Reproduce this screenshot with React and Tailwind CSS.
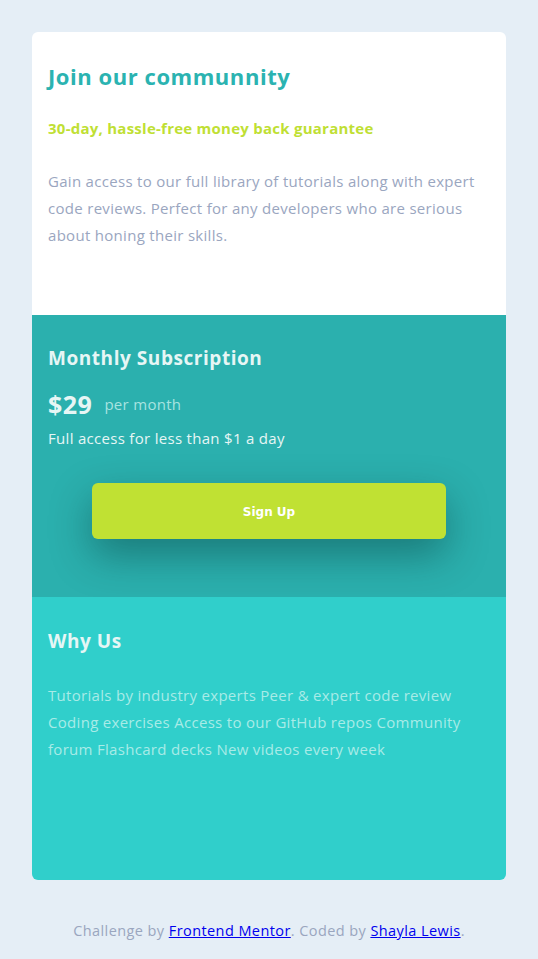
import React from 'react';

const font = { fontFamily: '"Open Sans", Lato, sans-serif' };

export default function App() {
  return (
    <div className="min-h-screen bg-[#e5eef6] px-8 pt-8" style={font}>
      {/* Card */}
      <div className="rounded-md overflow-hidden flex flex-col">
        {/* Intro */}
        <div className="bg-white h-[283px] px-4 pt-[30px]">
          <h1 className="text-[22px] font-bold text-[#2bb3b1] tracking-[0.55px] leading-7">Join our communnity</h1>
          <p className="mt-[28px] text-[15px] font-bold text-[#c0df34] tracking-[0.25px] leading-5">30-day, hassle-free money back guarantee</p>
          <p className="mt-[30px] text-[15px] tracking-[0.3px] leading-[27px] text-[#9aa6bf]">
            Gain access to our full library of tutorials along with expert code reviews. Perfect for any developers who are serious about honing their skills.
          </p>
        </div>

        {/* Monthly subscription */}
        <div className="bg-[#2bb0ae] h-[282px] px-4 pt-[31px]">
          <h2 className="text-[19px] font-bold text-[#e6f6f5] tracking-[0.55px] leading-6">Monthly Subscription</h2>
          <div className="mt-[20px] flex items-center">
            <span className="text-[25px] font-bold text-[#e6f6f5] tracking-[0.5px] leading-7">$29</span>
            <span className="ml-[12px] text-[15px] text-[#a7e3e0] tracking-[0.3px] leading-7">per month</span>
          </div>
          <p className="mt-[10px] text-[15px] text-[#e6f6f5] tracking-[0.3px] leading-5">Full access for less than $1 a day</p>
          <div className="flex justify-center mt-[35px]">
            <button
              className="w-[354px] h-[56px] pt-[2px] rounded-md bg-[#c0e133] text-white text-[12px] font-bold shadow-[0_16px_40px_rgba(0,40,40,0.4)]"
              style={{ fontFamily: 'Verdana, "DejaVu Sans", sans-serif' }}
            >
              Sign Up
            </button>
          </div>
        </div>

        {/* Why us */}
        <div className="bg-[#30cfcb] h-[283px] px-4 pt-[32px]">
          <h2 className="text-[19px] font-bold text-[#e6f6f5] tracking-[0.55px] leading-6">Why Us</h2>
          <p className="mt-[29px] text-[15px] tracking-[0.3px] leading-[27px] text-[#a8ebe7]">
            Tutorials by industry experts Peer &amp; expert code review Coding exercises Access to our GitHub repos Community forum Flashcard decks New videos every week
          </p>
        </div>
      </div>

      {/* Footer */}
      <p className="text-center text-[14.5px] tracking-[0.42px] text-[#9aa6bf] pt-[40px] pb-4">
        Challenge by <a href="#" className="text-[#0000ee] underline">Frontend Mentor</a>. Coded by{' '}
        <a href="#" className="text-[#0000ee] underline">Shayla Lewis</a>.
      </p>
    </div>
  );
}
